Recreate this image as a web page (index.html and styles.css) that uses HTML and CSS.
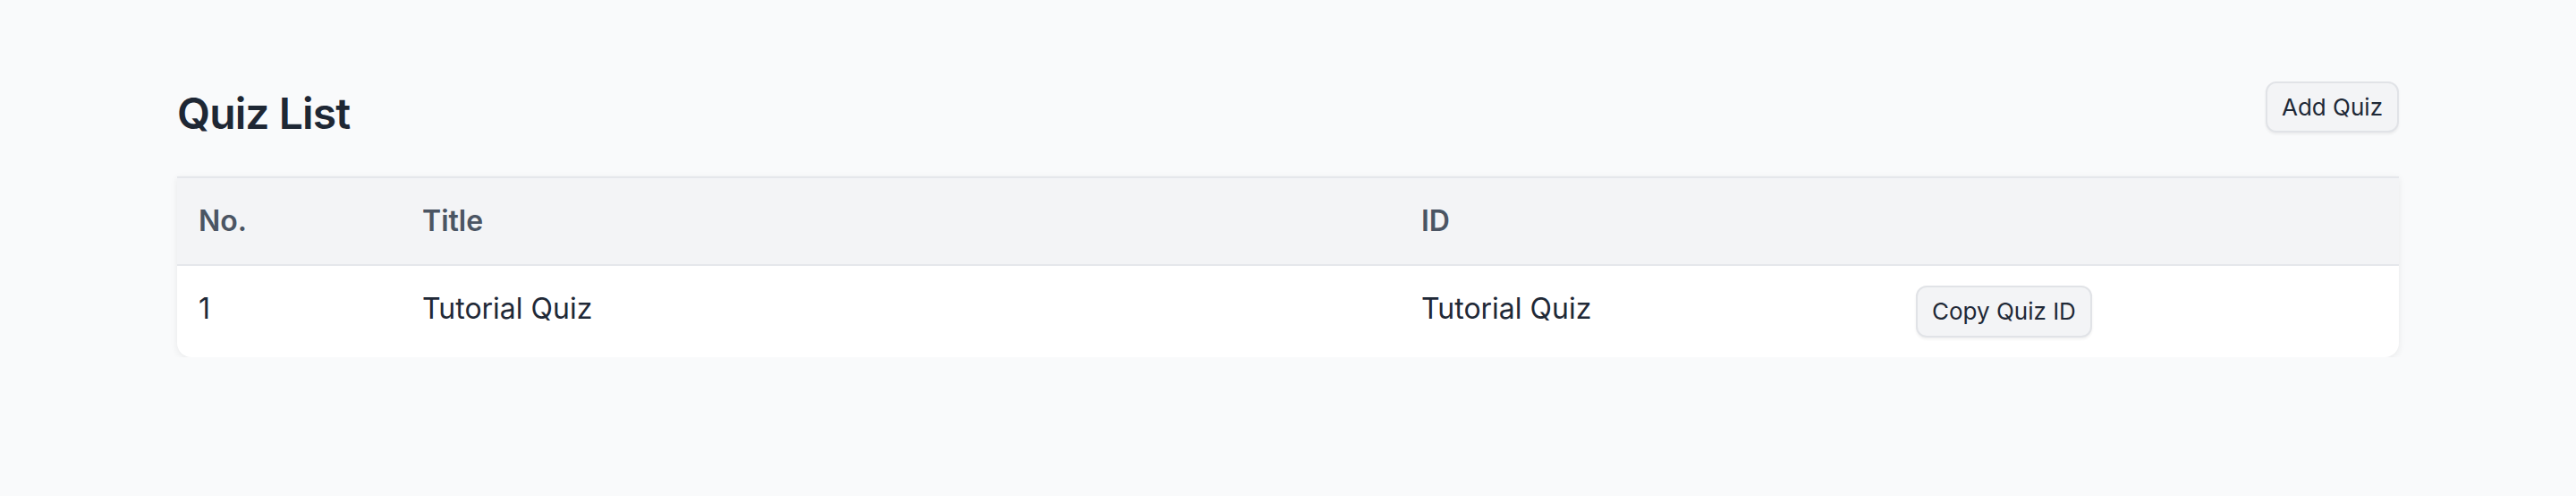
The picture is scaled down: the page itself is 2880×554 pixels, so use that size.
FILE: index.html
```html
<!DOCTYPE html>
<html lang="en">
<head>
<meta charset="utf-8">
<title>Quiz List</title>
<link rel="stylesheet" href="styles.css">
</head>
<body>
<main class="page">
  <header class="page-header">
    <h1 class="page-title">Quiz List</h1>
    <button class="btn btn-add" type="button">Add Quiz</button>
  </header>
  <div class="card">
    <table class="quiz-table">
      <colgroup>
        <col class="col-no">
        <col class="col-title">
        <col class="col-id">
        <col class="col-action">
      </colgroup>
      <thead>
        <tr>
          <th>No.</th>
          <th>Title</th>
          <th>ID</th>
          <th></th>
        </tr>
      </thead>
      <tbody>
        <tr>
          <td>1</td>
          <td>Tutorial Quiz</td>
          <td>Tutorial Quiz</td>
          <td class="cell-action"><button class="btn btn-copy" type="button">Copy Quiz ID</button></td>
        </tr>
      </tbody>
    </table>
  </div>
</main>
</body>
</html>
```

FILE: styles.css
```css
* {
  box-sizing: border-box;
}

html, body {
  margin: 0;
  padding: 0;
  background: #f9fafb;
  font-family: Inter, "Noto Sans", "Liberation Sans", sans-serif;
  color: #1f2937;
}

.page {
  padding: 91px 198px 0;
}

.page-header {
  display: flex;
  justify-content: space-between;
  align-items: flex-start;
  margin-bottom: 38px;
}

.page-title {
  margin: 4px 0 0;
  font-size: 48px;
  line-height: 64px;
  font-weight: 600;
  letter-spacing: -0.9px;
  color: #1e2734;
}

.btn {
  font-family: Inter, "Noto Sans", "Liberation Sans", sans-serif;
  font-size: 26px;
  line-height: 40px;
  font-weight: 400;
  color: #1f2937;
  background: #f3f4f6;
  border: 2px solid #e1e3e7;
  border-radius: 12px;
  box-shadow: 0 2px 3px rgba(0, 0, 0, 0.06);
  padding: 0 16px;
  cursor: pointer;
}

.btn-add {
  height: 57px;
}

.btn-copy {
  height: 58px;
}

.card {
  background: #ffffff;
  border-top: 2px solid #e5e7eb;
  border-radius: 0 0 16px 16px;
  box-shadow: 0 2px 8px rgba(0, 0, 0, 0.07);
  overflow: hidden;
}

.quiz-table {
  width: 100%;
  border-collapse: collapse;
  table-layout: fixed;
}

.col-no { width: 250px; }
.col-title { width: 1117px; }
.col-id { width: 553px; }
.col-action { width: 564px; }

.quiz-table th {
  background: #f3f4f6;
  color: #4b5563;
  font-size: 32px;
  line-height: 48px;
  font-weight: 600;
  text-align: left;
  padding: 24px 24px;
  border-bottom: 2px solid #e5e7eb;
}

.quiz-table td {
  font-size: 32px;
  line-height: 48px;
  font-weight: 400;
  color: #1f2937;
  text-align: left;
  vertical-align: top;
  padding: 24px 24px;
}

.quiz-table td.cell-action {
  padding: 22px 24px;
}
```
